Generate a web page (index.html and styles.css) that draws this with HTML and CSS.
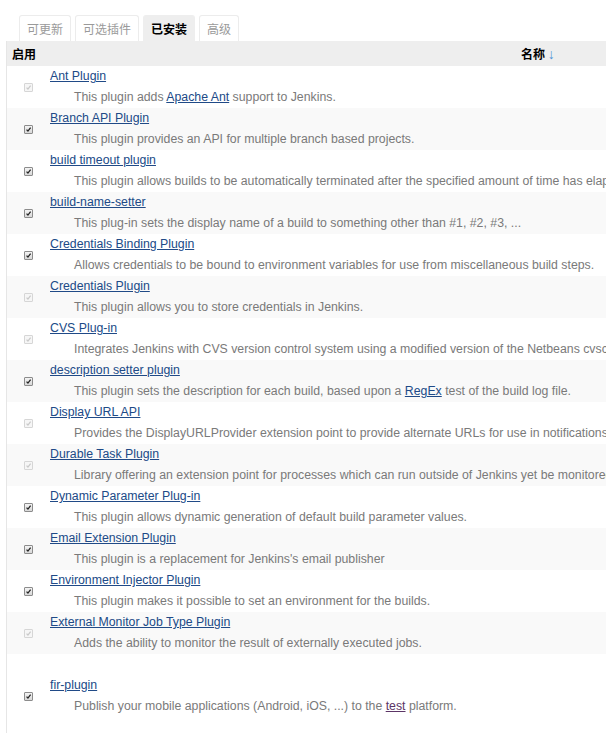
FILE: index.html
```html
<!DOCTYPE html>
<html lang="zh">
<head>
<meta charset="utf-8">
<title>插件管理</title>
<link rel="stylesheet" href="styles.css">
</head>
<body>
<div class="page">
  <div class="tabs">
    <span class="tab">可更新</span>
    <span class="tab">可选插件</span>
    <span class="tab active">已安装</span>
    <span class="tab">高级</span>
  </div>
  <table class="plugins">
    <thead>
      <tr>
        <th class="c-en">启用</th>
        <th class="c-name">名称 <span class="arrow">↓</span></th>
      </tr>
    </thead>
    <tbody>
      <tr><td class="c-en"><span class="cb dis"><svg viewBox="0 0 9 9"><path d="M2 4.6 L3.8 6.6 L7.2 2"/></svg></span></td>
        <td class="c-name"><a href="#" class="title">Ant Plugin</a><div class="desc">This plugin adds <a href="#">Apache Ant</a> support to Jenkins.</div></td></tr>
      <tr><td class="c-en"><span class="cb"><svg viewBox="0 0 9 9"><path d="M2 4.6 L3.8 6.6 L7.2 2"/></svg></span></td>
        <td class="c-name"><a href="#" class="title">Branch API Plugin</a><div class="desc">This plugin provides an API for multiple branch based projects.</div></td></tr>
      <tr><td class="c-en"><span class="cb"><svg viewBox="0 0 9 9"><path d="M2 4.6 L3.8 6.6 L7.2 2"/></svg></span></td>
        <td class="c-name"><a href="#" class="title">build timeout plugin</a><div class="desc">This plugin allows builds to be automatically terminated after the specified amount of time has elapsed.</div></td></tr>
      <tr><td class="c-en"><span class="cb"><svg viewBox="0 0 9 9"><path d="M2 4.6 L3.8 6.6 L7.2 2"/></svg></span></td>
        <td class="c-name"><a href="#" class="title">build-name-setter</a><div class="desc">This plug-in sets the display name of a build to something other than #1, #2, #3, ...</div></td></tr>
      <tr><td class="c-en"><span class="cb"><svg viewBox="0 0 9 9"><path d="M2 4.6 L3.8 6.6 L7.2 2"/></svg></span></td>
        <td class="c-name"><a href="#" class="title">Credentials Binding Plugin</a><div class="desc">Allows credentials to be bound to environment variables for use from miscellaneous build steps.</div></td></tr>
      <tr><td class="c-en"><span class="cb dis"><svg viewBox="0 0 9 9"><path d="M2 4.6 L3.8 6.6 L7.2 2"/></svg></span></td>
        <td class="c-name"><a href="#" class="title">Credentials Plugin</a><div class="desc">This plugin allows you to store credentials in Jenkins.</div></td></tr>
      <tr><td class="c-en"><span class="cb dis"><svg viewBox="0 0 9 9"><path d="M2 4.6 L3.8 6.6 L7.2 2"/></svg></span></td>
        <td class="c-name"><a href="#" class="title">CVS Plug-in</a><div class="desc">Integrates Jenkins with CVS version control system using a modified version of the Netbeans cvsclient.</div></td></tr>
      <tr><td class="c-en"><span class="cb"><svg viewBox="0 0 9 9"><path d="M2 4.6 L3.8 6.6 L7.2 2"/></svg></span></td>
        <td class="c-name"><a href="#" class="title">description setter plugin</a><div class="desc">This plugin sets the description for each build, based upon a <a href="#">RegEx</a> test of the build log file.</div></td></tr>
      <tr><td class="c-en"><span class="cb dis"><svg viewBox="0 0 9 9"><path d="M2 4.6 L3.8 6.6 L7.2 2"/></svg></span></td>
        <td class="c-name"><a href="#" class="title">Display URL API</a><div class="desc">Provides the DisplayURLProvider extension point to provide alternate URLs for use in notifications.</div></td></tr>
      <tr><td class="c-en"><span class="cb dis"><svg viewBox="0 0 9 9"><path d="M2 4.6 L3.8 6.6 L7.2 2"/></svg></span></td>
        <td class="c-name"><a href="#" class="title">Durable Task Plugin</a><div class="desc">Library offering an extension point for processes which can run outside of Jenkins yet be monitored.</div></td></tr>
      <tr><td class="c-en"><span class="cb"><svg viewBox="0 0 9 9"><path d="M2 4.6 L3.8 6.6 L7.2 2"/></svg></span></td>
        <td class="c-name"><a href="#" class="title">Dynamic Parameter Plug-in</a><div class="desc">This plugin allows dynamic generation of default build parameter values.</div></td></tr>
      <tr><td class="c-en"><span class="cb"><svg viewBox="0 0 9 9"><path d="M2 4.6 L3.8 6.6 L7.2 2"/></svg></span></td>
        <td class="c-name"><a href="#" class="title">Email Extension Plugin</a><div class="desc">This plugin is a replacement for Jenkins's email publisher</div></td></tr>
      <tr><td class="c-en"><span class="cb"><svg viewBox="0 0 9 9"><path d="M2 4.6 L3.8 6.6 L7.2 2"/></svg></span></td>
        <td class="c-name"><a href="#" class="title">Environment Injector Plugin</a><div class="desc">This plugin makes it possible to set an environment for the builds.</div></td></tr>
      <tr><td class="c-en"><span class="cb dis"><svg viewBox="0 0 9 9"><path d="M2 4.6 L3.8 6.6 L7.2 2"/></svg></span></td>
        <td class="c-name"><a href="#" class="title">External Monitor Job Type Plugin</a><div class="desc">Adds the ability to monitor the result of externally executed jobs.</div></td></tr>
      <tr class="tall"><td class="c-en"><span class="cb"><svg viewBox="0 0 9 9"><path d="M2 4.6 L3.8 6.6 L7.2 2"/></svg></span></td>
        <td class="c-name"><a href="#" class="title">fir-plugin</a><div class="desc">Publish your mobile applications (Android, iOS, ...) to the <a href="#" class="visited">test</a> platform.</div></td></tr>
    </tbody>
  </table>
</div>
</body>
</html>
```
FILE: styles.css
```css
html, body {
  margin: 0;
  padding: 0;
  background: #fff;
  overflow: hidden;
}
body {
  font-family: "Liberation Sans", Arial, "Noto Sans CJK SC", sans-serif;
  font-size: 12.3px;
  color: #333;
}
.page {
  padding: 15px 0 0 6px;
  white-space: nowrap;
}
.tabs {
  display: flex;
  gap: 4px;
  padding-left: 13px;
  height: 26px;
}
.tab {
  display: flex;
  align-items: center;
  padding: 0 7px;
  border: 1px solid #ececec;
  border-bottom: none;
  border-radius: 3px 3px 0 0;
  color: #9a9a9a;
  font-family: "Noto Sans CJK SC", sans-serif;
  font-size: 12px;
  line-height: 1;
  background: #fff;
}
.tab.active {
  background: #eeeeee;
  border-color: #eeeeee;
  color: #000;
  font-weight: bold;
}
.plugins {
  border-collapse: collapse;
  border-left: 1px solid #e6e6e6;
  width: 1040px;
}
.plugins th {
  background: #eeeeee;
  height: 25px;
  padding: 0;
  font-family: "Noto Sans CJK SC", sans-serif;
  font-weight: bold;
  font-size: 12px;
  color: #000;
  text-align: left;
}
.plugins th.c-en {
  padding-left: 5px;
  width: 38px;
}
.plugins th.c-name {
  padding-left: 471px;
}
.arrow {
  color: #4f93d6;
  font-family: "Liberation Sans", sans-serif;
  font-weight: normal;
  font-size: 14px;
}
.plugins td {
  padding: 0;
  vertical-align: middle;
  line-height: 21px;
}
.plugins td.c-en {
  padding-left: 16px;
  width: 27px;
}
.plugins tbody tr:nth-child(even) {
  background: #f9f9f9;
}
.plugins tr.tall td.c-name {
  padding: 21px 0;
}
a {
  color: #204a87;
  text-decoration: underline;
}
a.visited {
  color: #5c3566;
}
.title {
  display: inline-block;
}
.desc {
  margin-left: 24px;
  color: #7a7a7a;
}
.cb {
  display: block;
  width: 7px;
  height: 7px;
  margin-left: 1px;
  border: 1px solid #8c8c8c;
  border-radius: 1px;
  background: linear-gradient(#f4f4f4, #d8d8d8);
}
.cb svg {
  display: block;
  width: 7px;
  height: 7px;
  fill: none;
  stroke: #222;
  stroke-width: 1.6;
}
.cb.dis {
  border-color: #d6d6d6;
  background: #f6f6f6;
}
.cb.dis svg {
  stroke: #c9c9c9;
}
```
